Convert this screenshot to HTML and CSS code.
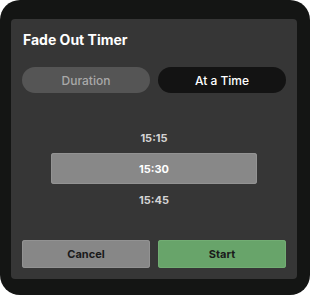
FILE: index.html
```html
<!DOCTYPE html>
<html>
<head>
<meta charset="utf-8">
<link rel="stylesheet" href="styles.css">
</head>
<body>
<div class="frame">
  <div class="panel">
    <h1 class="title">Fade Out Timer</h1>
    <div class="segments">
      <div class="seg seg-off">Duration</div>
      <div class="seg seg-on">At a Time</div>
    </div>
    <div class="picker">
      <div class="opt">15:15</div>
      <div class="opt opt-sel">15:30</div>
      <div class="opt">15:45</div>
    </div>
    <div class="actions">
      <div class="btn btn-cancel">Cancel</div>
      <div class="btn btn-start">Start</div>
    </div>
  </div>
</div>
</body>
</html>
```
FILE: styles.css
```css
html, body {
  margin: 0;
  padding: 0;
  background: #ffffff;
}
body {
  width: 311px;
  height: 297px;
  font-family: Inter, "Liberation Sans", sans-serif;
}
.frame {
  width: 310px;
  height: 295px;
  background: #141514;
  border-radius: 20px;
  padding: 19px 13px 16px 11px;
  box-sizing: border-box;
}
.panel {
  height: 260px;
  background: #363636;
  border-radius: 4px;
  padding: 0 11px 0 11px;
  box-sizing: border-box;
  display: flex;
  flex-direction: column;
}
.title {
  margin: 0;
  padding-top: 12px;
  height: 48px;
  box-sizing: border-box;
  font-size: 14px;
  font-weight: 700;
  color: #ffffff;
  line-height: 18px;
  padding-left: 1px;
}
.segments {
  display: flex;
  gap: 8px;
}
.seg {
  flex: 1;
  height: 26px;
  border-radius: 13px;
  display: flex;
  align-items: center;
  justify-content: center;
  font-size: 12px;
  font-weight: 500;
}
.seg-off {
  background: #555555;
  color: #a9a9a9;
}
.seg-on {
  background: #131313;
  color: #ffffff;
}
.picker {
  display: flex;
  flex-direction: column;
  align-items: center;
  padding-top: 29px;
}
.opt {
  width: 206px;
  height: 31px;
  display: flex;
  align-items: center;
  justify-content: center;
  font-size: 11px;
  font-weight: 700;
  color: #d4d4d4;
  border-radius: 3px;
}
.opt-sel {
  background: #888888;
  color: #ffffff;
  box-shadow: inset 0 0 0 1px #939393;
}
.actions {
  display: flex;
  gap: 8px;
  margin-top: auto;
  margin-bottom: 11px;
}
.btn {
  flex: 1;
  height: 28px;
  border-radius: 3px;
  display: flex;
  align-items: center;
  justify-content: center;
  font-size: 11px;
  font-weight: 700;
  color: #1a1a1a;
}
.btn-cancel {
  background: #878787;
  box-shadow: inset 0 0 0 1px #929292;
}
.btn-start {
  background: #68a46a;
  box-shadow: inset 0 0 0 1px #72ad73;
}
```
